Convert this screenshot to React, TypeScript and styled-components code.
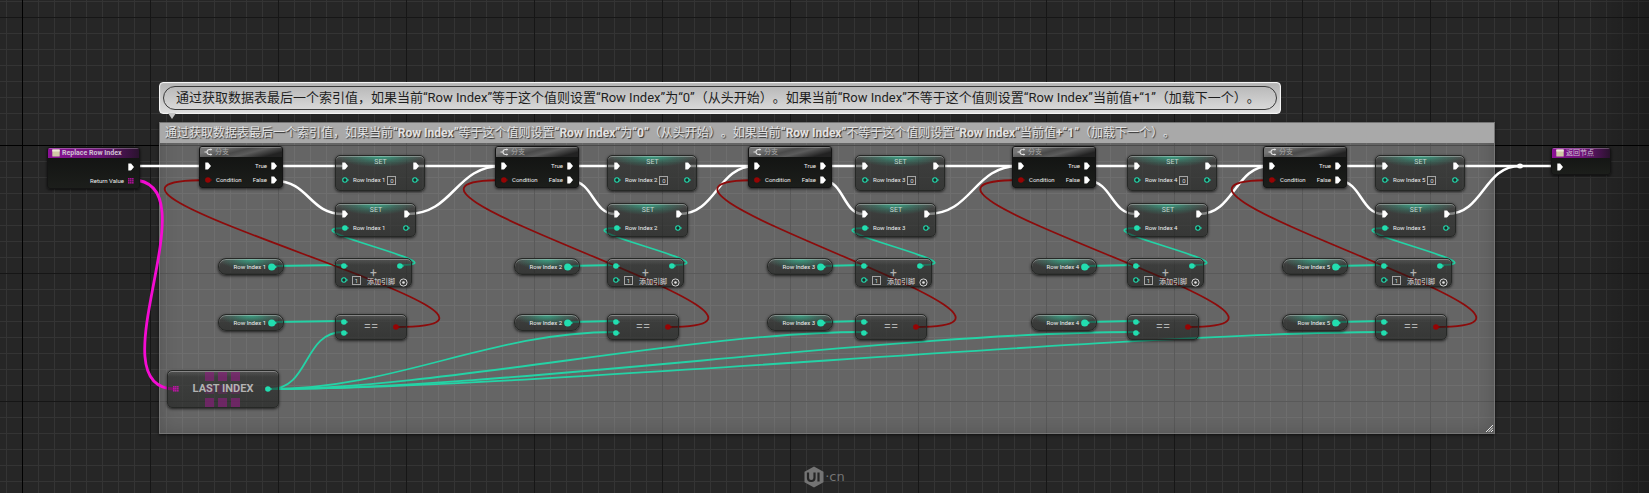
import React from 'react';
import styled, { createGlobalStyle, css } from 'styled-components';

const TEAL = '#22deb0';
const WIRE_TEAL = '#24d3a6';
const RED = '#960404';
const WIRE_RED = '#8c0b0b';
const MAGENTA = '#f40bd2';
const SANS = 'Roboto, "Noto Sans CJK SC", sans-serif';

const NOTE =
  '通过获取数据表最后一个索引值，如果当前“Row Index”等于这个值则设置“Row Index”为“0”（从头开始）。如果当前“Row Index”不等于这个值则设置“Row Index”当前值+“1”（加载下一个）。';

const GlobalStyle = createGlobalStyle`
  body { margin: 0; background: #262626; font-family: ${SANS}; }
  *, *::before, *::after { box-sizing: border-box; }
`;

/* ---------- canvas ---------- */

const Canvas = styled.main`
  position: relative;
  display: flex;
  flex-direction: column;
  justify-content: flex-end;
  width: 100%;
  min-height: max(100vh, 460px);
  overflow: hidden;
  background-color: #262626;
  background-image:
    linear-gradient(to left, rgba(0, 0, 0, 0.25), transparent 60px),
    linear-gradient(to right, #000 1px, transparent 1px),
    linear-gradient(to bottom, #000 1px, transparent 1px),
    linear-gradient(to right, #161616 1px, transparent 1px),
    linear-gradient(to bottom, #161616 1px, transparent 1px),
    linear-gradient(to right, #343434 1px, transparent 1px),
    linear-gradient(to bottom, #343434 1px, transparent 1px);
  background-size: 100% 100%, 2048px 100%, 100% 1024px, 128px 128px, 128px 128px, 16px 16px, 16px 16px;
  background-position: 0 0, 22px 0, 0 145px, 22px 17px, 22px 17px, 22px 17px, 22px 17px;
`;

const Wires = styled.svg`
  position: absolute;
  inset: 0;
  width: 100%;
  height: 100%;
  fill: none;
  pointer-events: none;
`;

const Placed = css<{ $x: number; $y: number }>`
  position: absolute;
  left: ${(p) => p.$x}px;
  top: ${(p) => p.$y}px;
`;

/* ---------- comment ---------- */

const Comment = styled.section<{ $x: number; $y: number }>`
  ${Placed}
  width: 1336px;
  height: 312px;
  border: 1px solid rgba(120, 120, 120, 0.8);
  background: rgba(255, 255, 255, 0.29);
  box-shadow: inset 0 0 18px rgba(0, 0, 0, 0.18), 0 1px 3px rgba(0, 0, 0, 0.6);
`;

const CommentTitle = styled.h1`
  margin: 0;
  height: 20px;
  padding: 0 5px;
  background: #a9a9a9;
  color: #e2e2e2;
  font-size: 12px;
  font-weight: 400;
  line-height: 20px;
  white-space: nowrap;
  text-spacing-trim: space-all;
  text-shadow: 1px 1px 1px rgba(0, 0, 0, 0.75);
`;

const Latin = styled.span<{ $bold?: boolean }>`
  font-weight: ${(p) => (p.$bold ? 700 : 400)};
`;

const Grip = styled.svg`
  position: absolute;
  right: 1px;
  bottom: 1px;
`;

const Bubble = styled.aside<{ $x: number; $y: number }>`
  ${Placed}
  padding: 3px;
  border: 1px solid #f4f4f4;
  border-radius: 4px;
  background: linear-gradient(#b4b4b4, #dedede);
  box-shadow: inset 0 0 1px #fff;
  &::after {
    content: '';
    position: absolute;
    left: 8px;
    top: 100%;
    border: 4px solid transparent;
    border-top: 6px solid #c4c4c4;
    border-bottom: 0;
  }
`;

const BubbleText = styled.p`
  margin: 0;
  padding: 0 16px 0 12px;
  border: 1px solid #3a3a3a;
  border-radius: 12px;
  color: #1e1e1e;
  font-size: 13px;
  line-height: 22px;
  white-space: nowrap;
  text-spacing-trim: space-all;
`;

/* ---------- nodes ---------- */

const FullNode = styled.article<{ $x: number; $y: number; $w: number }>`
  ${Placed}
  width: ${(p) => p.$w}px;
  border: 1px solid #141414;
  border-radius: 3px;
  overflow: hidden;
  background: linear-gradient(#101110, #1c1e1b);
  box-shadow: 0 1px 3px rgba(0, 0, 0, 0.7);
`;

const NodeHeader = styled.header<{ $tone: 'event' | 'branch' }>`
  display: flex;
  align-items: center;
  gap: 2px;
  height: 10px;
  padding: 0 4px;
  color: ${(p) => (p.$tone === 'event' ? '#cfc0d2' : '#a8a8a8')};
  font-size: 7px;
  line-height: 10px;
  white-space: nowrap;
  box-shadow: inset 0 1px 0 rgba(255, 255, 255, 0.25);
  background: ${(p) =>
    p.$tone === 'event'
      ? 'linear-gradient(to right, #8b1196, #6c1476 55%, #2a122e)'
      : 'linear-gradient(165deg, #757575 20%, #4a4a4a 45%, #5c5c5c 60%, #222 85%)'};
`;

const NodeBody = styled.div`
  padding: 2px 5px 0;
`;

const PinRow = styled.div<{ $gap?: number }>`
  display: flex;
  align-items: center;
  gap: ${(p) => p.$gap ?? 4}px;
  height: 14px;
  svg { flex-shrink: 0; }
`;

const PinLabel = styled.span`
  color: #f0f0f0;
  font-size: 6px;
  line-height: 8px;
  font-weight: 400;
  white-space: nowrap;
`;

const Spacer = styled.span`
  flex: 1;
`;

const GlassNode = styled.article<{ $x: number; $y: number; $w: number; $h: number; $tint?: boolean; $round?: number }>`
  ${Placed}
  width: ${(p) => p.$w}px;
  height: ${(p) => p.$h}px;
  border: 1px solid #262826;
  border-radius: ${(p) => p.$round ?? 5}px;
  background:
    ${(p) => (p.$tint ? 'radial-gradient(ellipse 50% 11px at 50% 0, rgba(50, 190, 150, 0.75), rgba(50, 160, 130, 0.35) 55%, transparent),' : '')}
    linear-gradient(rgba(120, 120, 120, 0.35), transparent 6px),
    linear-gradient(rgba(30, 32, 30, 0.55), rgba(16, 18, 16, 0.55));
  box-shadow: inset 0 1px 0 rgba(215, 215, 215, 0.4), 0 1px 3px rgba(0, 0, 0, 0.7);
`;

const SetBody = styled.div`
  padding: 3px 5px 0 6px;
`;

const SetTitle = styled.h2`
  flex: 1;
  align-self: flex-start;
  margin: 0;
  color: #c4d6d0;
  font-size: 7px;
  line-height: 7px;
  font-weight: 400;
  text-align: center;
`;

const ValueBox = styled.input`
  flex-shrink: 0;
  width: 9px;
  height: 9px;
  margin: 0 0 0 -2px;
  padding: 0;
  border: 1px solid #a5a5a5;
  border-radius: 0;
  background: transparent;
  color: #d8d8d8;
  font: 6px/7px ${SANS};
  text-align: center;
  outline: none;
`;

const GetterBody = styled.div`
  display: flex;
  align-items: center;
  justify-content: flex-end;
  gap: 2px;
  height: 100%;
  padding-right: 6px;
`;

const Operator = styled.span<{ $size?: number }>`
  position: absolute;
  inset: 0;
  display: flex;
  align-items: center;
  justify-content: center;
  color: #b4b4b4;
  font-size: ${(p) => p.$size ?? 12}px;
  line-height: 12px;
  pointer-events: none;
`;

const AddPin = styled.button`
  display: flex;
  align-items: center;
  gap: 4px;
  margin: 4px 0 0;
  padding: 0;
  border: 0;
  background: none;
  color: #dcdcdc;
  font: 7px/9px ${SANS};
  white-space: nowrap;
`;

const MathBody = styled.div`
  padding: 0 3px 0 5px;
`;

const SplitBody = styled.div`
  display: flex;
  align-items: center;
  justify-content: space-between;
  height: 100%;
  padding: 0 6px 0 5px;
`;

const PinStack = styled.div`
  display: flex;
  flex-direction: column;
  gap: 5px;
`;

const FunctionTitle = styled.h2`
  margin: 0;
  color: #b2b2b2;
  font: 700 11px/14px Roboto, sans-serif;
`;

const Matrix = styled.svg`
  position: absolute;
  left: 50%;
  top: 0;
  margin-left: -18px;
`;

const Watermark = styled.footer`
  position: relative;
  display: flex;
  align-items: center;
  justify-content: center;
  gap: 1px;
  padding-bottom: 5px;
  color: #747474;
  font: 13px/16px "DejaVu Sans", sans-serif;
`;

/* ---------- glyphs ---------- */

const ExecPin = () => (
  <svg width="6" height="8" viewBox="0 0 6 8" aria-hidden="true">
    <path d="M.3.5h2.4c.4 0 .6.2.8.4L6 4 3.500 7.100c-.2.2-.4.4-.8.4H.3z" fill="#fff" />
  </svg>
);

const DataPin = ({ color = TEAL, hollow = false, big = false }: { color?: string; hollow?: boolean; big?: boolean }) => (
  <svg width={big ? 9 : 7} height={big ? 8 : 6} viewBox="0 0 7 6" aria-hidden="true">
    <circle cx="2.900" cy="3" r={hollow ? 2.2 : 2.8} fill={hollow ? '#1c2a26' : color} stroke={hollow ? color : 'none'} strokeWidth="1.1" />
    <path d="M5.500 1.800 7 3 5.500 4.200z" fill={color} />
  </svg>
);

const ArrayPin = () => (
  <svg width="6" height="6" viewBox="0 0 6 6" fill={MAGENTA} aria-hidden="true">
    {[0, 1, 2].map((r) => [0, 1, 2].map((c) => <rect key={`${r}${c}`} x={c * 2 + 0.2} y={r * 2 + 0.2} width="1.300" height="1.300" />))}
  </svg>
);

const BranchIcon = () => (
  <svg width="9" height="8" viewBox="0 0 9 8" fill="none" stroke="#e2e2e2" strokeWidth="1.1" aria-hidden="true">
    <path d="M.5 4H3M7 1.500H5.500C3.800 1.500 3 2.600 3 4s.8 2.500 2.500 2.500H7" />
    <path d="M6.500.3 8.300 1.500 6.500 2.700zM6.500 5.300 8.300 6.500 6.500 7.700z" fill="#e2e2e2" stroke="none" />
  </svg>
);

const EventIcon = () => (
  <svg width="8" height="8" viewBox="0 0 8 8" aria-hidden="true">
    <rect x=".3" y=".5" width="7.400" height="7" rx=".6" fill="#cfc9a6" />
    <rect x=".3" y=".5" width="7.400" height="2" fill="#eee9da" />
  </svg>
);

const TargetIcon = () => (
  <svg width="9" height="9" viewBox="0 0 9 9" aria-hidden="true">
    <circle cx="4.500" cy="4.500" r="3.600" fill="none" stroke="#d4d4d4" />
    <circle cx="4.500" cy="4.500" r="1.300" fill="#e4e4e4" />
  </svg>
);

/* ---------- graph ---------- */

const columns = [
  { n: 1, branch: 199, set: 335, reach: 40 },
  { n: 2, branch: 495, set: 607, reach: 125 },
  { n: 3, branch: 748, set: 855, reach: 170 },
  { n: 4, branch: 1012, set: 1127, reach: 240 },
  { n: 5, branch: 1263, set: 1375, reach: 250 },
];

const KNOT = { x: 1520, y: 166 };

const curve = (x1: number, y1: number, x2: number, y2: number, h: number) =>
  `M${x1} ${y1}C${x1 + h} ${y1} ${x2 - h} ${y2} ${x2} ${y2}`;

const GraphWires = () => (
  <Wires aria-hidden="true">
    <g stroke="#fff" strokeWidth="2.500">
      <path d="M134 166H205" />
      {columns.map((c, i) => {
        const next = columns[i + 1];
        const end = next ? next.branch + 7 : KNOT.x;
        return (
          <g key={c.n}>
            <path d={`M${c.branch + 76} 166H${c.set + 8}`} />
            <path d={curve(c.branch + 76, 181, c.set + 8, 214, (c.set - c.branch - 68) / 2)} />
            <path d={`M${c.set + 81} 166H${end}`} />
            <path d={curve(c.set + 72, 214, end, 166, (end - c.set - 72) / 2)} />
          </g>
        );
      })}
      <path d={`M${KNOT.x} 166H1557`} />
      <ellipse cx={KNOT.x} cy={KNOT.y} rx="3" ry="2.500" fill="#fff" stroke="none" />
    </g>
    <g stroke={WIRE_TEAL} strokeWidth="1.800">
      {columns.map((c) => (
        <g key={c.n}>
          <path d={`M${c.branch + 73} 266L${c.set + 8} 265`} />
          <path d={`M${c.branch + 73} 322L${c.set + 8} 321`} />
          <path d={curve(c.set + 67, 265, c.set + 10, 228, 60)} />
          <path d={curve(270, 389, c.set + 8, 332, c.reach)} />
        </g>
      ))}
    </g>
    <g stroke={WIRE_RED} strokeWidth="1.800">
      {columns.map((c) => {
        const from = c.set + 61;
        const to = c.branch + 9;
        return <path key={c.n} d={curve(from, 327, to, 180, 73 + (from - to) * 0.7)} />;
      })}
    </g>
    <path d={curve(132, 180, 175, 389, 83)} stroke={MAGENTA} strokeWidth="2.800" />
  </Wires>
);

const BranchNode = ({ x }: { x: number }) => (
  <FullNode $x={x} $y={146} $w={84}>
    <NodeHeader $tone="branch">
      <BranchIcon />
      分支
    </NodeHeader>
    <NodeBody>
      <PinRow>
        <ExecPin />
        <Spacer />
        <PinLabel>True</PinLabel>
        <ExecPin />
      </PinRow>
      <PinRow>
        <DataPin color={RED} />
        <PinLabel>Condition</PinLabel>
        <Spacer />
        <PinLabel>False</PinLabel>
        <ExecPin />
      </PinRow>
    </NodeBody>
  </FullNode>
);

const SetNode = ({ x, y, n, literal }: { x: number; y: number; n: number; literal?: string }) => (
  <GlassNode $x={x} $y={y} $w={literal ? 90 : 81} $h={literal ? 36 : 34} $tint>
    <SetBody>
      <PinRow>
        <ExecPin />
        <SetTitle>SET</SetTitle>
        <ExecPin />
      </PinRow>
      <PinRow>
        <DataPin hollow={!!literal} />
        <PinLabel>Row Index {n}</PinLabel>
        {literal && <ValueBox defaultValue={literal} aria-label={`Row Index ${n}`} />}
        <Spacer />
        <DataPin hollow />
      </PinRow>
    </SetBody>
  </GlassNode>
);

const GetterNode = ({ x, y, n }: { x: number; y: number; n: number }) => (
  <GlassNode $x={x} $y={y} $w={66} $h={17} $tint $round={8}>
    <GetterBody>
      <PinLabel>Row Index {n}</PinLabel>
      <DataPin big />
    </GetterBody>
  </GlassNode>
);

const AddNode = ({ x }: { x: number }) => (
  <GlassNode $x={x} $y={258} $w={77} $h={29}>
    <Operator>+</Operator>
    <MathBody>
      <PinRow>
        <DataPin />
        <Spacer />
        <DataPin />
        <span />
      </PinRow>
      <PinRow $gap={6}>
        <DataPin hollow />
        <ValueBox defaultValue="1" aria-label="B" />
        <AddPin type="button">
          添加引脚
          <TargetIcon />
        </AddPin>
      </PinRow>
    </MathBody>
  </GlassNode>
);

const EqualNode = ({ x }: { x: number }) => (
  <GlassNode $x={x} $y={314} $w={72} $h={26}>
    <Operator $size={13}>==</Operator>
    <SplitBody>
      <PinStack>
        <DataPin />
        <DataPin />
      </PinStack>
      <DataPin color={RED} />
    </SplitBody>
  </GlassNode>
);

const LastIndexNode = () => (
  <GlassNode $x={167} $y={370} $w={112} $h={38}>
    <Matrix width="35" height="36" fill="#8a1f7d" aria-hidden="true">
      {[0, 1, 2].map((r) =>
        [0, 1, 2].map((c) => (
          <rect key={`${r}${c}`} x={c * 13} y={r * 13 + 1} width="9" height="9" opacity={r === 1 ? 0.3 : 0.65} />
        )),
      )}
    </Matrix>
    <Operator as="div">
      <FunctionTitle>LAST INDEX</FunctionTitle>
    </Operator>
    <SplitBody>
      <ArrayPin />
      <DataPin />
    </SplitBody>
  </GlassNode>
);

const MixedText = ({ bold = false }: { bold?: boolean }) => (
  <>
    {NOTE.split(/([ -~“”]+)/).map((part, i) =>
      i % 2 ? (
        <Latin key={i} $bold={bold}>
          {part}
        </Latin>
      ) : (
        part
      ),
    )}
  </>
);

export default function App() {
  return (
    <>
      <GlobalStyle />
      <Canvas>
        <Comment $x={159} $y={122}>
          <CommentTitle>
            <MixedText bold />
          </CommentTitle>
          <Grip width="7" height="7" viewBox="0 0 7 7" stroke="#e8e8e8" aria-hidden="true">
            <path d="M0 7 7 0M2.500 7 7 2.500M5 7 7 5" />
          </Grip>
        </Comment>
        <Bubble $x={159} $y={82}>
          <BubbleText>
            <MixedText />
          </BubbleText>
        </Bubble>

        <GraphWires />

        <FullNode $x={47} $y={147} $w={93}>
          <NodeHeader $tone="event">
            <EventIcon />
            <Latin $bold>Replace Row Index</Latin>
          </NodeHeader>
          <NodeBody>
            <PinRow>
              <Spacer />
              <ExecPin />
            </PinRow>
            <PinRow>
              <Spacer />
              <PinLabel>Return Value</PinLabel>
              <ArrayPin />
            </PinRow>
          </NodeBody>
        </FullNode>

        {columns.map((c) => (
          <React.Fragment key={c.n}>
            <BranchNode x={c.branch} />
            <SetNode x={c.set} y={155} n={c.n} literal="0" />
            <SetNode x={c.set} y={203} n={c.n} />
            <GetterNode x={c.branch + 19} y={258} n={c.n} />
            <AddNode x={c.set} />
            <GetterNode x={c.branch + 19} y={314} n={c.n} />
            <EqualNode x={c.set} />
          </React.Fragment>
        ))}

        <LastIndexNode />

        <FullNode $x={1551} $y={147} $w={60}>
          <NodeHeader $tone="event">
            <EventIcon />
            返回节点
          </NodeHeader>
          <NodeBody>
            <PinRow>
              <ExecPin />
            </PinRow>
          </NodeBody>
        </FullNode>

        <Watermark>
          <svg width="20" height="22" viewBox="0 0 20 22" aria-hidden="true">
            <path d="M10 .5 19.500 5.700v10.600L10 21.500.5 16.300V5.700z" fill="#747474" />
            <path d="M4 6.500v5.500c0 2 1.200 3 3.200 3s3.300-1 3.300-3V6.500M14.500 6.500V15.500" fill="none" stroke="#262626" strokeWidth="2.200" />
          </svg>
          <span>·cn</span>
        </Watermark>
      </Canvas>
    </>
  );
}
